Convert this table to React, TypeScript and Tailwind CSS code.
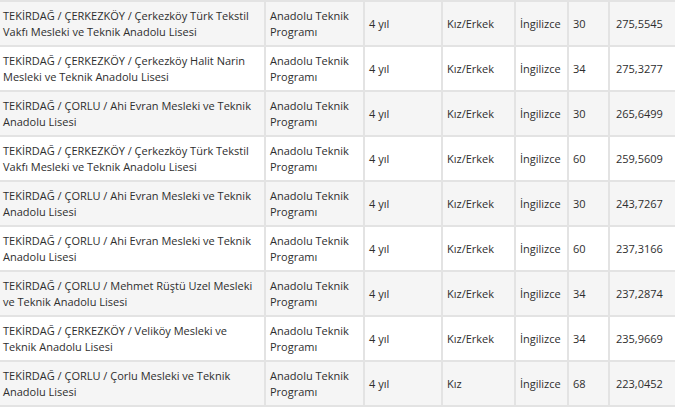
import React from "react";

type Row = { school: [string, string]; seats: string; score: string; gender: string };

const rows: Row[] = [
  { school: ["TEKİRDAĞ / ÇERKEZKÖY / Çerkezköy Türk Tekstil", "Vakfı Mesleki ve Teknik Anadolu Lisesi"], seats: "30", score: "275,5545", gender: "Kız/Erkek" },
  { school: ["TEKİRDAĞ / ÇERKEZKÖY / Çerkezköy Halit Narin", "Mesleki ve Teknik Anadolu Lisesi"], seats: "34", score: "275,3277", gender: "Kız/Erkek" },
  { school: ["TEKİRDAĞ / ÇORLU / Ahi Evran Mesleki ve Teknik", "Anadolu Lisesi"], seats: "30", score: "265,6499", gender: "Kız/Erkek" },
  { school: ["TEKİRDAĞ / ÇERKEZKÖY / Çerkezköy Türk Tekstil", "Vakfı Mesleki ve Teknik Anadolu Lisesi"], seats: "60", score: "259,5609", gender: "Kız/Erkek" },
  { school: ["TEKİRDAĞ / ÇORLU / Ahi Evran Mesleki ve Teknik", "Anadolu Lisesi"], seats: "30", score: "243,7267", gender: "Kız/Erkek" },
  { school: ["TEKİRDAĞ / ÇORLU / Ahi Evran Mesleki ve Teknik", "Anadolu Lisesi"], seats: "60", score: "237,3166", gender: "Kız/Erkek" },
  { school: ["TEKİRDAĞ / ÇORLU / Mehmet Rüştü Uzel Mesleki", "ve Teknik Anadolu Lisesi"], seats: "34", score: "237,2874", gender: "Kız/Erkek" },
  { school: ["TEKİRDAĞ / ÇERKEZKÖY / Veliköy Mesleki ve", "Teknik Anadolu Lisesi"], seats: "34", score: "235,9669", gender: "Kız/Erkek" },
  { school: ["TEKİRDAĞ / ÇORLU / Çorlu Mesleki ve Teknik", "Anadolu Lisesi"], seats: "68", score: "223,0452", gender: "Kız" },
];

export default function App() {
  return (
    <div className="w-[675px] h-[410px] overflow-hidden bg-white">
      <div
        className="grid grid-cols-[264px_97px_76px_71px_51px_39px_1fr] gap-[2px] bg-[#e3e3e3] py-[2px] text-[11px] leading-[16px] text-[#2e2e2e]"
        style={{ fontFamily: '"Open Sans", "Noto Sans", sans-serif' }}
      >
        {rows.map((r, i) => {
          const bg = i % 2 === 0 ? "bg-[#f5f5f5]" : "bg-white";
          const cell = `${bg} h-[43px] flex items-center whitespace-nowrap`;
          return (
            <React.Fragment key={i}>
              <div className={`${cell} pl-[3px]`}>
                <div>
                  {r.school[0]}
                  <br />
                  {r.school[1]}
                </div>
              </div>
              <div className={`${cell} pl-[4px]`}>
                <div>
                  Anadolu Teknik
                  <br />
                  Programı
                </div>
              </div>
              <div className={`${cell} pl-[4px]`}>4 yıl</div>
              <div className={`${cell} pl-[4px]`}>{r.gender}</div>
              <div className={`${cell} pl-[4px]`}>İngilizce</div>
              <div className={`${cell} pl-[4px]`}>{r.seats}</div>
              <div className={`${cell} pl-[6px]`}>{r.score}</div>
            </React.Fragment>
          );
        })}
      </div>
    </div>
  );
}
